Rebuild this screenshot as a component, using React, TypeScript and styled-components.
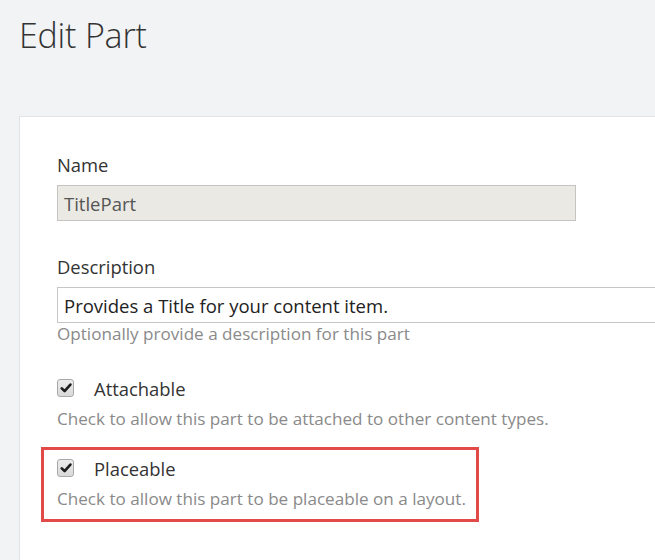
import styled, { createGlobalStyle } from 'styled-components';

const GlobalStyle = createGlobalStyle`
  html, body {
    margin: 0;
    padding: 0;
    background: #f2f3f5;
    overflow: hidden;
  }
  body {
    font-family: 'Open Sans', 'Liberation Sans', sans-serif;
    color: #333;
  }
`;

const CheckMark = () => (
  <svg width="12" height="12" viewBox="0 0 12 12">
    <path d="M1.8 6.4 L4.6 9.2 L10.4 2.6" fill="none" stroke="#1e1e1e" strokeWidth="2.6" strokeLinecap="round" strokeLinejoin="round" />
  </svg>
);

interface CheckFieldProps {
  label: string;
  hint: string;
}

const CheckField = ({ label, hint }: CheckFieldProps) => (
  <>
    <CheckRowStyle>
      <CheckBoxStyle>
        <CheckMark />
      </CheckBoxStyle>
      <span>{label}</span>
    </CheckRowStyle>
    <HintStyle>{hint}</HintStyle>
  </>
);

const App = () => {
  return (
    <PageStyle>
      <GlobalStyle />
      <TitleStyle>Edit Part</TitleStyle>
      <CardStyle>
        <FieldStyle>
          <LabelStyle>Name</LabelStyle>
          <InputStyle $readonly $width={519}>TitlePart</InputStyle>
        </FieldStyle>
        <FieldStyle>
          <LabelStyle>Description</LabelStyle>
          <InputStyle>Provides a Title for your content item.</InputStyle>
          <HintStyle>Optionally provide a description for this part</HintStyle>
        </FieldStyle>
        <FieldStyle>
          <CheckField label="Attachable" hint="Check to allow this part to be attached to other content types." />
        </FieldStyle>
        <HighlightStyle>
          <CheckField label="Placeable" hint="Check to allow this part to be placeable on a layout." />
        </HighlightStyle>
      </CardStyle>
    </PageStyle>
  );
};

const PageStyle = styled.div`
  display: flex;
  flex-direction: column;
  min-height: 560px;
  padding: 15px 0 0 19px;
  box-sizing: border-box;
`;

const TitleStyle = styled.h1`
  margin: 0;
  font-size: 34px;
  line-height: 40px;
  font-weight: 300;
  color: #333;
  letter-spacing: -0.2px;
`;

const CardStyle = styled.div`
  flex: 1;
  margin: 61px -20px 0 0;
  background: #fff;
  border: 1px solid #e2e3e5;
  border-right: none;
  border-bottom: none;
  padding: 34px 0 0 37px;
  display: flex;
  flex-direction: column;
  gap: 32px;
`;

const FieldStyle = styled.div`
  display: flex;
  flex-direction: column;
`;

const LabelStyle = styled.div`
  font-size: 18.4px;
  line-height: 24px;
  color: #333;
  margin: 2px 0 8px;
`;

const InputStyle = styled.div<{ $readonly?: boolean; $width?: number }>`
  box-sizing: border-box;
  height: 36px;
  width: ${({ $width }) => ($width ? `${$width}px` : 'auto')};
  padding: 0 6px;
  display: flex;
  align-items: center;
  font-size: 18.5px;
  white-space: nowrap;
  border: 1px solid ${({ $readonly }) => ($readonly ? '#c4c4c2' : '#c6c6c6')};
  background: ${({ $readonly }) => ($readonly ? '#eae9e3' : '#fff')};
  color: ${({ $readonly }) => ($readonly ? '#555' : '#222')};
  ${({ $width }) => (!$width ? 'border-right: none;' : '')}
`;

const HintStyle = styled.div`
  font-size: 17.1px;
  line-height: 22px;
  color: #8a8a8a;
`;

const CheckRowStyle = styled.div`
  display: flex;
  align-items: flex-start;
  gap: 20px;
  font-size: 18.4px;
  line-height: 24px;
  color: #333;
  margin-bottom: 7px;
`;

const CheckBoxStyle = styled.span`
  box-sizing: border-box;
  width: 17px;
  height: 18px;
  margin-top: 2px;
  border: 1px solid #a9a9a9;
  border-radius: 3px;
  background: linear-gradient(#ececec, #d9d9d9);
  display: flex;
  align-items: center;
  justify-content: center;
`;

const HighlightStyle = styled.div`
  box-sizing: border-box;
  width: 438px;
  margin: -15px 0 0 -16px;
  padding: 7px 0 9px 13px;
  border: 3px solid #e24a48;
`;

export default App;
